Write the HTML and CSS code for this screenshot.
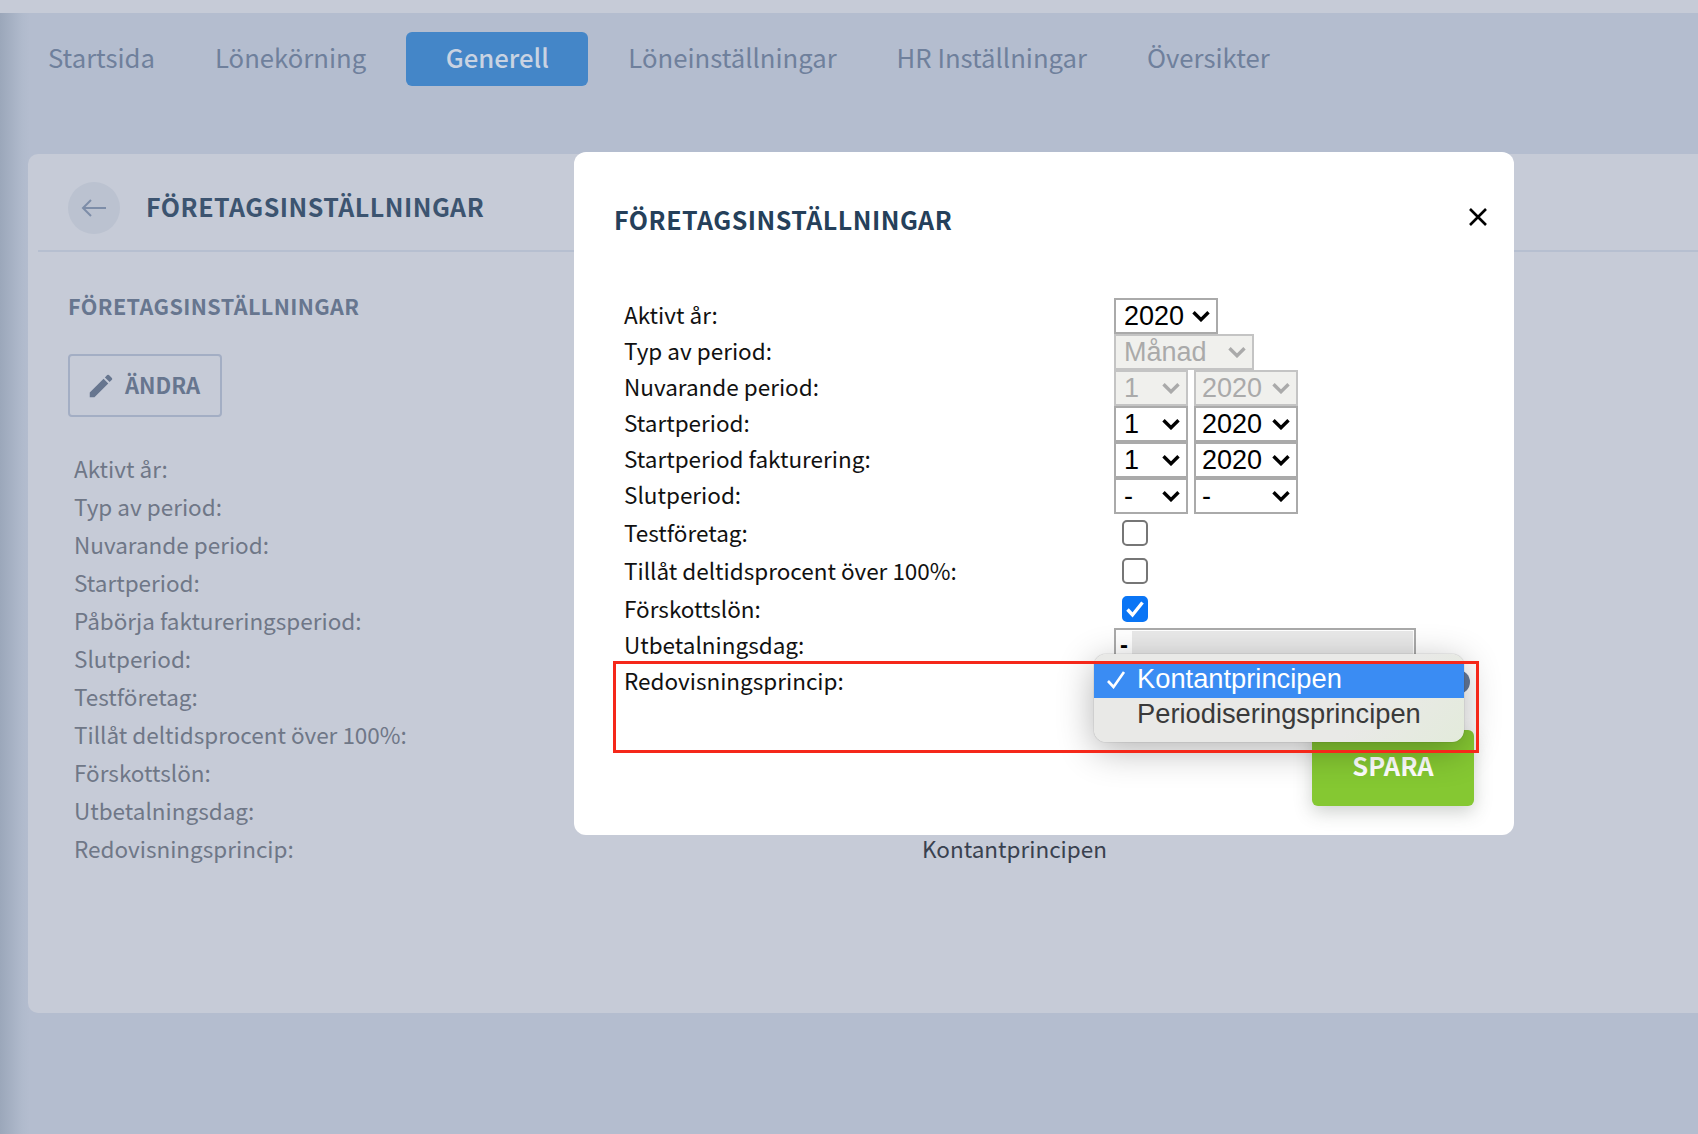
FILE: index.html
```html
<!DOCTYPE html>
<html lang="sv">
<head>
  <meta charset="UTF-8">
  <meta name="viewport" content="width=device-width, initial-scale=1.0">
  <title>Företagsinställningar</title>
  <link rel="stylesheet" href="styles.css">
</head>
<body>
  <svg class="defs" width="0" height="0">
    <symbol id="chevron" viewBox="0 0 18 12">
      <path d="M1.5 2.2L9 9.7l7.5-7.5" fill="none" stroke="currentColor" stroke-width="3.4"/>
    </symbol>
  </svg>

  <div class="topbar"></div>

  <nav class="tabs">
    <a class="tab">Startsida</a>
    <a class="tab">Lönekörning</a>
    <a class="tab active">Generell</a>
    <a class="tab">Löneinställningar</a>
    <a class="tab">HR Inställningar</a>
    <a class="tab">Översikter</a>
  </nav>

  <main class="card">
    <header class="card-head">
      <span class="back">
        <svg width="26" height="18" viewBox="0 0 26 18"><path d="M25 9H2M10 1L2 9l8 8" fill="none" stroke="currentColor" stroke-width="2"/></svg>
      </span>
      <h1>FÖRETAGSINSTÄLLNINGAR</h1>
    </header>
    <section class="card-body">
      <h2>FÖRETAGSINSTÄLLNINGAR</h2>
      <button class="edit">
        <svg width="30" height="30" viewBox="0 0 24 24"><path d="M3 17.25V21h3.75L17.81 9.94l-3.75-3.75L3 17.25zM20.71 7.04a1 1 0 000-1.41l-2.34-2.34a1 1 0 00-1.41 0l-1.83 1.83 3.75 3.75 1.83-1.83z" fill="currentColor"/></svg>
        ÄNDRA
      </button>
      <dl class="info">
        <dt>Aktivt år:</dt><dd></dd>
        <dt>Typ av period:</dt><dd></dd>
        <dt>Nuvarande period:</dt><dd></dd>
        <dt>Startperiod:</dt><dd></dd>
        <dt>Påbörja faktureringsperiod:</dt><dd></dd>
        <dt>Slutperiod:</dt><dd></dd>
        <dt>Testföretag:</dt><dd></dd>
        <dt>Tillåt deltidsprocent över 100%:</dt><dd></dd>
        <dt>Förskottslön:</dt><dd></dd>
        <dt>Utbetalningsdag:</dt><dd></dd>
        <dt>Redovisningsprincip:</dt><dd>Kontantprincipen</dd>
      </dl>
    </section>
  </main>

  <div class="modal">
    <div class="modal-head">
      <h3>FÖRETAGSINSTÄLLNINGAR</h3>
      <svg class="close" width="20" height="20" viewBox="0 0 20 20"><path d="M2 2l16 16M18 2L2 18" stroke="#000" stroke-width="2.6"/></svg>
    </div>

    <div class="form">
      <div class="row"><label>Aktivt år:</label>
        <div class="sel w-year">2020<svg class="chev"><use href="#chevron"/></svg></div>
      </div>
      <div class="row"><label>Typ av period:</label>
        <div class="sel w-month off">Månad<svg class="chev"><use href="#chevron"/></svg></div>
      </div>
      <div class="row"><label>Nuvarande period:</label>
        <div class="sel w-num off">1<svg class="chev"><use href="#chevron"/></svg></div>
        <div class="sel w-pair off">2020<svg class="chev"><use href="#chevron"/></svg></div>
      </div>
      <div class="row"><label>Startperiod:</label>
        <div class="sel w-num">1<svg class="chev"><use href="#chevron"/></svg></div>
        <div class="sel w-pair">2020<svg class="chev"><use href="#chevron"/></svg></div>
      </div>
      <div class="row"><label>Startperiod fakturering:</label>
        <div class="sel w-num">1<svg class="chev"><use href="#chevron"/></svg></div>
        <div class="sel w-pair">2020<svg class="chev"><use href="#chevron"/></svg></div>
      </div>
      <div class="row"><label>Slutperiod:</label>
        <div class="sel w-num">-<svg class="chev"><use href="#chevron"/></svg></div>
        <div class="sel w-pair">-<svg class="chev"><use href="#chevron"/></svg></div>
      </div>
      <div class="row tall"><label>Testföretag:</label><span class="check"></span></div>
      <div class="row tall"><label>Tillåt deltidsprocent över 100%:</label><span class="check"></span></div>
      <div class="row tall"><label>Förskottslön:</label>
        <span class="check on">
          <svg width="20" height="18" viewBox="0 0 20 18"><path d="M2.5 9.5l5 5.5 10-12.5" fill="none" stroke="#fff" stroke-width="3.4"/></svg>
        </span>
      </div>
      <div class="row"><label>Utbetalningsdag:</label>
        <div class="sel w-wide">-<span class="sel-fade"></span></div>
      </div>
      <div class="row"><label>Redovisningsprincip:</label><span class="help"></span></div>
    </div>

    <div class="modal-foot"><button class="save">SPARA</button></div>

    <div class="dropdown">
      <div class="opt picked">
        <svg width="20" height="18" viewBox="0 0 20 18"><path d="M2 10l5.5 6L18 1" fill="none" stroke="#fff" stroke-width="2.6"/></svg>
        Kontantprincipen
      </div>
      <div class="opt">Periodiseringsprincipen</div>
    </div>
    <div class="marker"></div>
  </div>
</body>
</html>
```
FILE: styles.css
```css
/* page behind the dialog */
* {
  box-sizing: border-box;
}
body {
  position: relative;
  height: 1134px;
  margin: 0;
  overflow: hidden;
  font-family: "Noto Sans CJK SC", "Noto Sans", sans-serif;
  background: linear-gradient(90deg, #9ba7ba 0, #b0bacc 22px, #b4bdcf 30px);
}
.defs {
  position: absolute;
}
.topbar {
  height: 13px;
  background-color: #c6cbd7;
}

.tabs {
  display: flex;
  gap: 20px;
  height: 54px;
  margin: 19px 0 68px;
  padding-left: 28px;
}
.tab {
  display: flex;
  align-items: center;
  padding: 0 20px 6px;
  font-size: 25.7px;
  color: #6f809c;
}
.tab.active {
  padding: 0 39.5px 6px;
  font-weight: 500;
  color: #c9d3e2;
  background-color: #4486c8;
  border-radius: 6px;
}

.card {
  height: 859px;
  margin-left: 28px;
  background-color: #c6cbd7;
  border-radius: 10px 0 0 10px;
}
.card-head {
  display: flex;
  align-items: center;
  height: 98px;
  margin-left: 10px;
  padding: 12px 0 0 30px;
  border-bottom: 2px solid #b6bfd0;
}
.back {
  display: flex;
  align-items: center;
  justify-content: center;
  width: 52px;
  height: 52px;
  margin-right: 26px;
  color: #7d8da8;
  background-color: #bbc2d0;
  border-radius: 50%;
}
h1, h3 {
  margin: 0;
  font-size: 25px;
  font-weight: 700;
  letter-spacing: 0.5px;
  line-height: 34px;
}
h1 {
  margin-bottom: 5px;
  color: #3c5470;
}
.card-body {
  padding: 39px 0 0 40px;
}
h2 {
  margin: 0;
  font-size: 21.6px;
  font-weight: 700;
  line-height: 30px;
  letter-spacing: 0.4px;
  color: #67768f;
}
.edit {
  display: flex;
  align-items: center;
  gap: 9px;
  width: 154px;
  height: 63px;
  margin-top: 33px;
  padding: 0 0 4px 16px;
  font: 700 22px "Noto Sans CJK SC", sans-serif;
  color: #67768f;
  background: none;
  border: 2px solid #a3aec4;
  border-radius: 4px;
}
.edit svg {
  margin-top: 4px;
}
.info {
  display: grid;
  grid-template-columns: 848px auto;
  grid-auto-rows: 38px;
  margin: 32px 0 0 6px;
  font-size: 22.5px;
  line-height: 38px;
}
.info dt {
  color: #6f7787;
}
.info dd {
  margin: 0;
  color: #39414f;
}

/* dialog */
.modal {
  position: absolute;
  top: 152px;
  left: 574px;
  width: 940px;
  height: 683px;
  padding: 0 40px;
  background-color: #fff;
  border-radius: 12px;
}
.modal-head {
  display: flex;
  align-items: center;
  justify-content: space-between;
  height: 146px;
  padding: 0 0 12px;
}
h3 {
  color: #25405a;
}
.close {
  margin-right: -14px;
  margin-bottom: 4px;
}
.form {
  padding-left: 10px;
}
.row {
  display: flex;
  align-items: flex-start;
  height: 36px;
  font-size: 22.5px;
  line-height: 33px;
  color: #111;
}
.row.tall {
  align-items: center;
  height: 38px;
}
.row.tall label {
  margin-bottom: 2px;
}
.row label {
  width: 490px;
}
.sel {
  display: flex;
  align-items: center;
  justify-content: space-between;
  height: 36px;
  margin-right: 6px;
  padding: 0 6px 0 8px;
  font: 27px "Liberation Sans", Arial, sans-serif;
  color: #000;
  background-color: #fff;
  border: 2px solid #aaa;
}
.sel.off {
  color: #aaa;
  background-color: #f0f0ed;
  border-color: #c4c4c4;
}
.chev {
  width: 18px;
  height: 12px;
}
.w-year {
  width: 104px;
}
.w-month {
  width: 140px;
}
.w-num {
  width: 74px;
}
.w-pair {
  width: 104px;
  padding-left: 6px;
}
.w-wide {
  position: relative;
  width: 302px;
  padding-left: 4px;
  align-items: flex-start;
  line-height: 30px;
  font-size: 24px;
  font-weight: 700;
}
.sel-fade {
  position: absolute;
  top: 1px;
  right: 1px;
  left: 16px;
  height: 30px;
  background-color: #e9e9e9;
}
.check {
  display: flex;
  align-items: center;
  justify-content: center;
  width: 26px;
  height: 26px;
  margin-left: 8px;
  border: 2px solid #767676;
  border-radius: 5px;
}
.check.on {
  background-color: #0a75f5;
  border-color: #0a75f5;
}
.help {
  width: 24px;
  height: 24px;
  margin: 6px 0 0 332px;
  background-color: #64799a;
  border-radius: 50%;
}
.modal-foot {
  display: flex;
  justify-content: flex-end;
  margin-top: 30px;
}
.save {
  width: 162px;
  height: 76px;
  padding: 0 0 8px;
  font: 700 25.5px "Noto Sans CJK SC", sans-serif;
  color: #fff;
  background-color: #85c832;
  border: 0;
  border-radius: 6px;
  box-shadow: 0 6px 18px rgba(60, 70, 60, 0.25);
}

/* native select popup and the red mark drawn over the screenshot */
.dropdown {
  position: absolute;
  top: 502px;
  left: 520px;
  width: 370px;
  height: 88px;
  padding-top: 10px;
  font: 27.3px "Liberation Sans", Arial, sans-serif;
  color: #3a3a3a;
  background: linear-gradient(135deg, #e9e9e7 72%, #e3ebdb);
  border-radius: 12px;
  box-shadow: 0 8px 36px rgba(0, 0, 0, 0.3), 0 0 1px rgba(0, 0, 0, 0.5);
}
.opt {
  position: relative;
  height: 36px;
  padding-left: 43px;
  line-height: 32px;
}
.opt svg {
  position: absolute;
  top: 7px;
  left: 12px;
}
.opt.picked {
  height: 34px;
  line-height: 30px;
  color: #fff;
  background-color: #3a8cf3;
}
.marker {
  position: absolute;
  top: 509px;
  left: 39px;
  width: 866px;
  height: 92px;
  border: 3px solid #f5281a;
}
```
